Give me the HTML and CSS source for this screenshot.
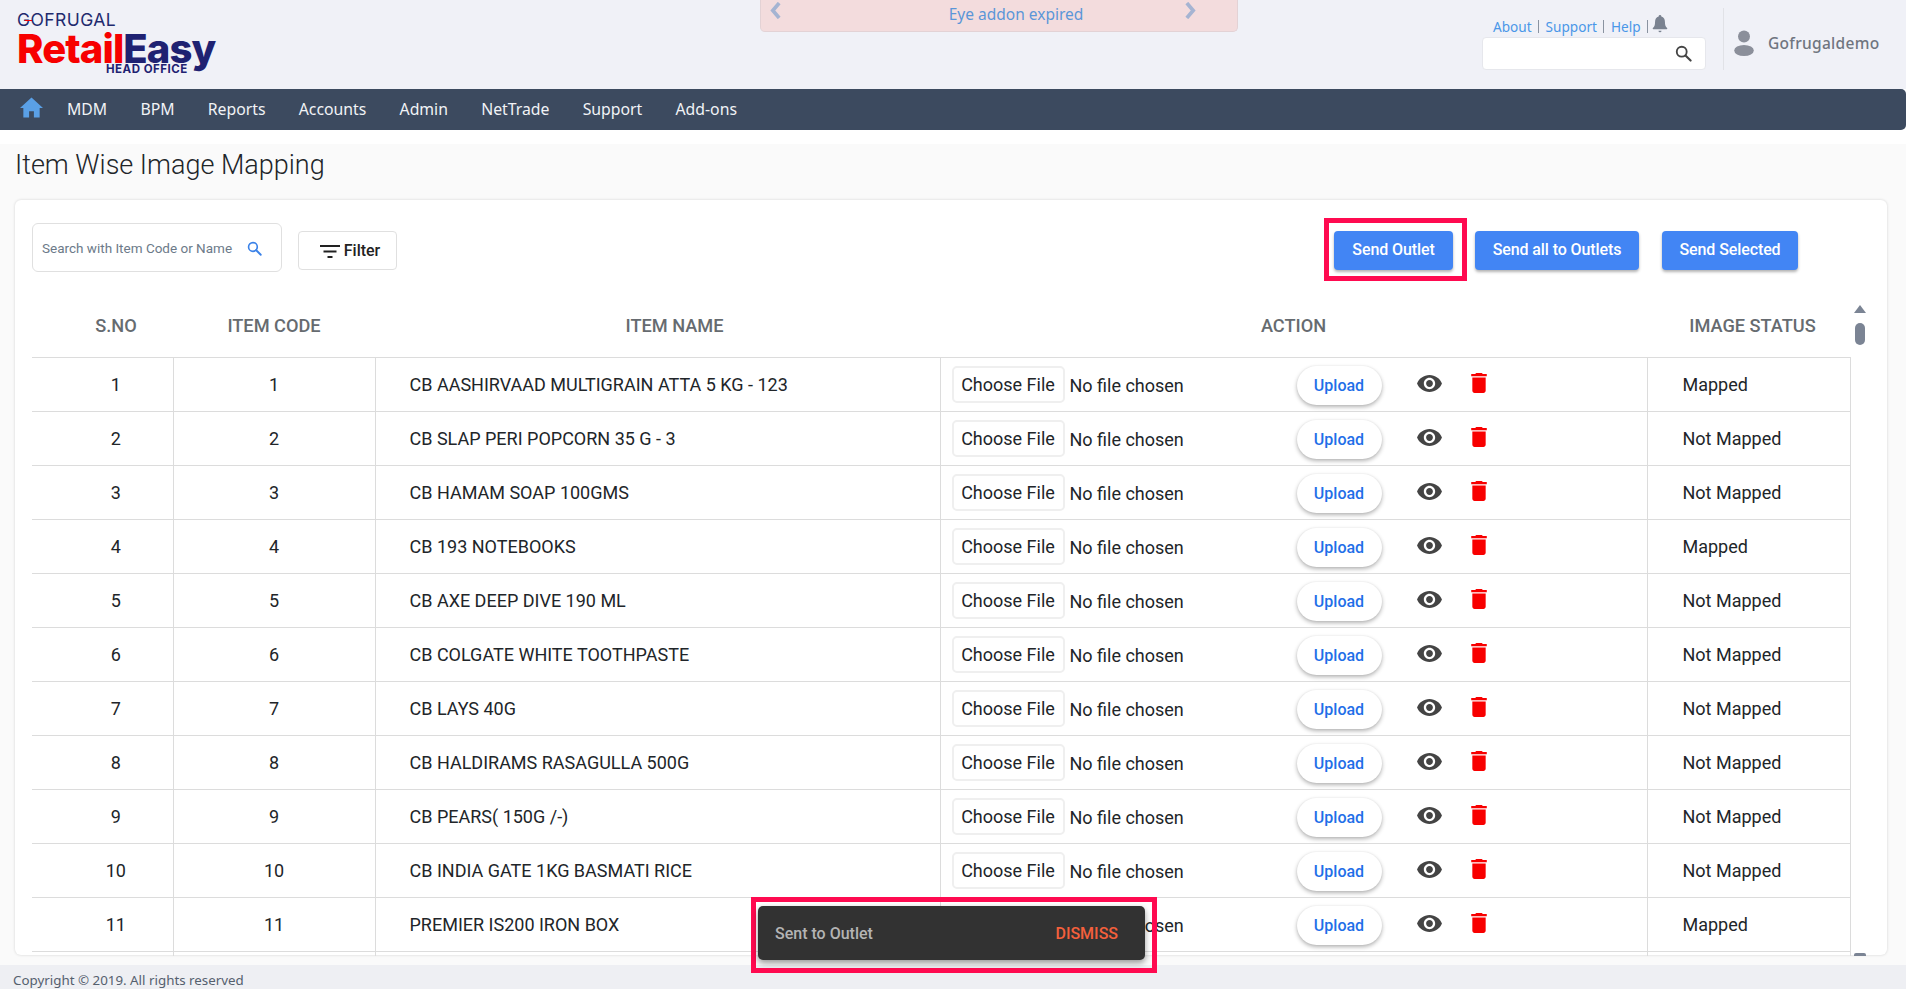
FILE: index.html
```html
<!DOCTYPE html>
<html lang="en">
<head>
<meta charset="utf-8">
<title>Item Wise Image Mapping</title>
<link rel="stylesheet" href="styles.css">
</head>
<body>
<svg class="defs" aria-hidden="true">
  <symbol id="eye" viewBox="1 4.5 22 15"><path d="M12 4.5C7 4.5 2.73 7.61 1 12c1.73 4.39 6 7.5 11 7.5s9.27-3.11 11-7.5c-1.73-4.39-6-7.5-11-7.5zM12 17c-2.76 0-5-2.24-5-5s2.24-5 5-5 5 2.24 5 5-2.24 5-5 5zm0-8c-1.66 0-3 1.34-3 3s1.34 3 3 3 3-1.34 3-3-1.34-3-3-3z"/></symbol>
  <symbol id="trash" viewBox="5 3 14 18"><path d="M6 19c0 1.1.9 2 2 2h8c1.1 0 2-.9 2-2V7H6v12zM19 4h-3.5l-1-1h-5l-1 1H5v2h14V4z"/></symbol>
  <symbol id="search" viewBox="0 0 24 24"><circle cx="9.5" cy="9.5" r="7" fill="none" stroke="currentColor" stroke-width="2.6"/><path d="M14.8 14.8 22 22" fill="none" stroke="currentColor" stroke-width="3" stroke-linecap="round"/></symbol>
</svg>
<div class="app">
  <header class="topbar">
    <div class="logo">
      <span class="logo-brand">GOFRUGAL</span>
      <span class="logo-main"><span class="logo-retail">Retail</span><span class="logo-easy">Easy</span></span>
      <span class="logo-sub">HEAD OFFICE</span>
    </div>
    <div class="banner">
      <svg class="chev" viewBox="0 0 12 16"><path d="M9 1 3 8l6 7" /></svg>
      <span>Eye addon expired</span>
      <svg class="chev" viewBox="0 0 12 16"><path d="M3 1l6 7-6 7" /></svg>
    </div>
    <div class="top-right">
      <div class="top-tools">
        <div class="top-links">
          <a>About</a><i></i><a>Support</a><i></i><a>Help</a><i></i>
          <svg class="bell" viewBox="0 0 16 19"><path d="M8 0a1.4 1.4 0 0 0-1.4 1.5C3.9 2.200 2.800 4.500 2.800 7c0 3.600-.7 5.300-2.300 6.700-.4.400-.2 1.300.6 1.300h13.800c.8 0 1-.9.6-1.300-1.600-1.400-2.300-3.100-2.300-6.700 0-2.500-1.100-4.800-3.800-5.500A1.400 1.400 0 0 0 8 0zM6.400 16.600h3.200a1.600 1.600 0 0 1-3.200 0z"/></svg>
        </div>
        <div class="top-search">
          <svg class="top-search-icon"><use href="#search"/></svg>
        </div>
      </div>
      <div class="user">
        <svg class="avatar" viewBox="0 0 20 26"><circle cx="10" cy="6.500" r="6"/><ellipse cx="10" cy="20.500" rx="9.800" ry="5.500"/></svg>
        <span>Gofrugaldemo</span>
      </div>
    </div>
  </header>

  <nav class="navbar">
    <svg class="home" viewBox="0 0 24 21"><path d="M12 0 0 11h3.500v10h6v-6.500h5V21h6V11H24z"/></svg>
    <a>MDM</a><a>BPM</a><a>Reports</a><a>Accounts</a><a>Admin</a><a>NetTrade</a><a>Support</a><a>Add-ons</a>
  </nav>

  <main class="content">
    <h1 class="page-title">Item Wise Image Mapping</h1>
    <section class="card">
      <div class="toolbar">
        <div class="search-box">
          <span>Search with Item Code or Name</span>
          <svg class="search-icon"><use href="#search"/></svg>
        </div>
        <button class="filter-btn">
          <svg class="filter-icon" viewBox="0 0 20 13"><path d="M0 0h20v2H0zM3.500 5.500h13v2h-13zM7.500 11h5v2h-5z"/></svg>
          Filter
        </button>
        <div class="actions">
          <div class="highlighted">
            <button class="primary send-outlet">Send Outlet</button>
            <span class="mark mark-btn"></span>
          </div>
          <button class="primary send-all">Send all to Outlets</button>
          <button class="primary send-selected">Send Selected</button>
        </div>
      </div>
      <div class="table-area">
        <table class="grid">
          <colgroup><col class="c1"><col class="c2"><col class="c3"><col class="c4"><col class="c5"></colgroup>
          <thead>
            <tr><th class="col-sno">S.NO</th><th>ITEM CODE</th><th class="col-name">ITEM NAME</th><th>ACTION</th><th class="col-status-h">IMAGE STATUS</th></tr>
          </thead>
          <tbody>
            <tr><td class="col-sno">1</td><td>1</td><td class="col-name">CB AASHIRVAAD MULTIGRAIN ATTA 5 KG - 123</td><td><div class="act"><button class="file">Choose File</button><span class="nofile">No file chosen</span><button class="upload">Upload</button><svg class="eye"><use href="#eye"/></svg><svg class="trash"><use href="#trash"/></svg></div></td><td class="col-status">Mapped</td></tr>
            <tr><td class="col-sno">2</td><td>2</td><td class="col-name">CB SLAP PERI POPCORN 35 G - 3</td><td><div class="act"><button class="file">Choose File</button><span class="nofile">No file chosen</span><button class="upload">Upload</button><svg class="eye"><use href="#eye"/></svg><svg class="trash"><use href="#trash"/></svg></div></td><td class="col-status">Not Mapped</td></tr>
            <tr><td class="col-sno">3</td><td>3</td><td class="col-name">CB HAMAM SOAP 100GMS</td><td><div class="act"><button class="file">Choose File</button><span class="nofile">No file chosen</span><button class="upload">Upload</button><svg class="eye"><use href="#eye"/></svg><svg class="trash"><use href="#trash"/></svg></div></td><td class="col-status">Not Mapped</td></tr>
            <tr><td class="col-sno">4</td><td>4</td><td class="col-name">CB 193 NOTEBOOKS</td><td><div class="act"><button class="file">Choose File</button><span class="nofile">No file chosen</span><button class="upload">Upload</button><svg class="eye"><use href="#eye"/></svg><svg class="trash"><use href="#trash"/></svg></div></td><td class="col-status">Mapped</td></tr>
            <tr><td class="col-sno">5</td><td>5</td><td class="col-name">CB AXE DEEP DIVE 190 ML</td><td><div class="act"><button class="file">Choose File</button><span class="nofile">No file chosen</span><button class="upload">Upload</button><svg class="eye"><use href="#eye"/></svg><svg class="trash"><use href="#trash"/></svg></div></td><td class="col-status">Not Mapped</td></tr>
            <tr><td class="col-sno">6</td><td>6</td><td class="col-name">CB COLGATE WHITE TOOTHPASTE</td><td><div class="act"><button class="file">Choose File</button><span class="nofile">No file chosen</span><button class="upload">Upload</button><svg class="eye"><use href="#eye"/></svg><svg class="trash"><use href="#trash"/></svg></div></td><td class="col-status">Not Mapped</td></tr>
            <tr><td class="col-sno">7</td><td>7</td><td class="col-name">CB LAYS 40G</td><td><div class="act"><button class="file">Choose File</button><span class="nofile">No file chosen</span><button class="upload">Upload</button><svg class="eye"><use href="#eye"/></svg><svg class="trash"><use href="#trash"/></svg></div></td><td class="col-status">Not Mapped</td></tr>
            <tr><td class="col-sno">8</td><td>8</td><td class="col-name">CB HALDIRAMS RASAGULLA 500G</td><td><div class="act"><button class="file">Choose File</button><span class="nofile">No file chosen</span><button class="upload">Upload</button><svg class="eye"><use href="#eye"/></svg><svg class="trash"><use href="#trash"/></svg></div></td><td class="col-status">Not Mapped</td></tr>
            <tr><td class="col-sno">9</td><td>9</td><td class="col-name">CB PEARS( 150G /-)</td><td><div class="act"><button class="file">Choose File</button><span class="nofile">No file chosen</span><button class="upload">Upload</button><svg class="eye"><use href="#eye"/></svg><svg class="trash"><use href="#trash"/></svg></div></td><td class="col-status">Not Mapped</td></tr>
            <tr><td class="col-sno">10</td><td>10</td><td class="col-name">CB INDIA GATE 1KG BASMATI RICE</td><td><div class="act"><button class="file">Choose File</button><span class="nofile">No file chosen</span><button class="upload">Upload</button><svg class="eye"><use href="#eye"/></svg><svg class="trash"><use href="#trash"/></svg></div></td><td class="col-status">Not Mapped</td></tr>
            <tr><td class="col-sno">11</td><td>11</td><td class="col-name">PREMIER IS200 IRON BOX</td><td><div class="act"><button class="file">Choose File</button><span class="nofile">No file chosen</span><button class="upload">Upload</button><svg class="eye"><use href="#eye"/></svg><svg class="trash"><use href="#trash"/></svg></div></td><td class="col-status">Mapped</td></tr>
            <tr class="cut-row"><td></td><td></td><td></td><td></td><td></td></tr>
          </tbody>
        </table>
        <div class="rail">
          <span class="rail-arrow"></span>
          <span class="rail-thumb"></span>
          <span class="rail-end"></span>
        </div>
      </div>
    </section>
  </main>

  <footer class="footer">Copyright © 2019. All rights reserved</footer>

  <div class="toast-wrap">
    <div class="toast">
      <span class="toast-msg">Sent to Outlet</span>
      <span class="toast-action">DISMISS</span>
    </div>
  </div>
</div>
</body>
</html>
```
FILE: styles.css
```css
* { box-sizing: border-box; }
html, body { margin: 0; height: 100%; overflow: hidden; }
body { font-family: Roboto, "Liberation Sans", sans-serif; color: #212529; background: #fff; }
.defs { position: absolute; width: 0; height: 0; }
button { font-family: inherit; cursor: pointer; }

.app { height: 989px; display: flex; flex-direction: column; position: relative; }

/* top bar */
.topbar { height: 89px; flex: none; background: #f0f1f7; display: grid; grid-template-columns: 760px 478px 1fr; align-items: start; }
.logo { display: flex; flex-direction: column; padding: 12px 0 0 17px; font-family: Inter, "Liberation Sans", sans-serif; position: relative; }
.logo::after { content: ""; position: absolute; left: 25px; top: 20px; width: 7px; height: 1px; background: #f70000; }
.logo-brand { font-size: 17.500px; line-height: 16px; font-weight: 400; color: #1f2a6e; letter-spacing: .42px; }
.logo-main { font-size: 40px; line-height: 29px; font-weight: 800; letter-spacing: -.9px; margin-top: 6px; }
.logo-retail { color: #f70000; }
.logo-easy { color: #1f2272; }
.logo-sub { font-size: 11.500px; line-height: 10px; font-weight: 700; color: #1f2272; letter-spacing: .5px; margin: 1px 0 0 89px; }

.banner { height: 32px; background: #f3dcdd; border: 1px solid #e3d2d5; border-top: 0; border-radius: 0 0 5px 5px; display: flex; align-items: center; justify-content: space-between; padding: 0 40px 3px 8px; font: 15.500px "Noto Sans", sans-serif; color: #5b96d8; }
.chev { width: 14px; height: 17px; margin-top: -8px; fill: none; stroke: #a5b4d2; stroke-width: 3.500; }
.banner span { flex: 1; text-align: center; padding-left: 66px; }

.top-right { display: flex; justify-content: flex-end; height: 100%; }
.top-tools { width: 224px; display: flex; flex-direction: column; padding-top: 16px; margin-right: 17px; }
.top-links { display: flex; align-items: center; height: 21px; padding-left: 11px; font: 13.600px "Noto Sans", sans-serif; color: #4a97e8; }
.top-links i { width: 1px; height: 13px; background: #8a93a0; margin: 0 6.500px; }
.top-links i:nth-of-type(3) { margin-right: 4px; }
.bell { width: 16px; height: 18px; fill: #7a8290; margin-top: -6px; }
.top-search { height: 33px; background: #fff; border: 1px solid #e6e7ec; border-radius: 4px; display: flex; align-items: center; justify-content: flex-end; padding-right: 13px; }
.top-search-icon { width: 17px; height: 17px; color: #444; }
.user { width: 183px; margin-top: 8px; height: 62px; padding: 8px 0 0 10px; border-left: 1px solid #e1e2e7; display: flex; align-items: center; gap: 14px; font: 500 15.500px "Noto Sans", sans-serif; letter-spacing: .3px; color: #6f757f; }
.avatar { width: 20px; height: 26px; fill: #8b8f9a; flex: none; margin-top: -1px; }

/* nav */
.navbar { height: 41px; flex: none; background: #3c4a5f; border-radius: 0 5px 5px 0; display: flex; align-items: center; padding: 0 0 2px 20px; gap: 33.200px; font: 15.800px "Noto Sans", sans-serif; color: #f1f3f6; }
.home { width: 23px; height: 21px; fill: #5aa0e6; margin-right: -9.200px; margin-top: -2px; }
.navbar a { white-space: nowrap; }

/* main */
.content { flex: 1; min-height: 0; margin-top: 14px; background: #fafafa; padding: 0 19px 0 15px; display: flex; flex-direction: column; }
.page-title { margin: 0; height: 56px; padding: 3px 0 0; font-size: 27px; line-height: 36px; font-weight: 300; color: #212529; }
.card { height: 755px; background: #fff; border-radius: 6px; box-shadow: 0 0 3px rgba(0,0,0,.16); padding: 0 0 0 17px; display: flex; flex-direction: column; flex: none; }

.toolbar { height: 100px; flex: none; display: flex; align-items: flex-start; }
.search-box { margin-top: 23px; width: 250px; height: 49px; border: 1px solid #e0e0e0; border-radius: 6px; display: flex; align-items: center; padding: 1px 0 0 9px; font-size: 13.500px; color: #6c7a89; white-space: nowrap; }
.search-icon { width: 15px; height: 15px; margin-left: 15px; color: #3b82e8; flex: none; }
.filter-btn { margin: 31px 0 0 16px; width: 99px; height: 39px; background: #fff; border: 1px solid #e0e0e0; border-radius: 4px; font-size: 16px; font-weight: 500; color: #222; display: flex; align-items: center; justify-content: center; gap: 4px; padding: 0 0 0 5px; }
.filter-icon { width: 20px; height: 13px; fill: #222; margin-top: 2px; }
.actions { margin-left: 937px; margin-top: 31px; display: flex; }
.primary { height: 39px; background: #4285f4; border: 0; border-radius: 4px; color: #fff; font-size: 16px; font-weight: 500; box-shadow: 0 2px 3px rgba(0,0,0,.3); padding: 0 0 2px; letter-spacing: -.1px; }
.highlighted { position: relative; height: 39px; }
.send-outlet { width: 119px; }
.send-all { width: 164px; margin-left: 22px; }
.send-selected { width: 136px; margin-left: 23px; }
.mark { position: absolute; border: 5px solid #ff0a50; pointer-events: none; }
.mark-btn { left: -10px; top: -13px; right: -14px; bottom: -11px; }

.table-area { height: 656px; flex: none; display: flex; overflow: hidden; }
.grid { width: 1818px; flex: none; align-self: flex-start; table-layout: fixed; border-collapse: collapse; font-size: 18px; }
.c1 { width: 141px; } .c2 { width: 202px; } .c3 { width: 565px; } .c4 { width: 707px; } .c5 { width: 203px; }
.grid th { height: 57px; padding: 0 0 5px; font-size: 18.200px; font-weight: 500; color: #666b70; text-align: center; border-bottom: 1px solid #dcdcdc; }
.grid td { height: 54px; padding: 0; text-align: center; border: 1px solid #dcdcdc; white-space: nowrap; }
.grid th:first-child, .grid td:first-child { border-left: 0; }
.grid .col-sno { padding-left: 27px; }
.grid .col-name { padding-left: 34px; }
.grid td.col-name { text-align: left; }
.grid .col-status-h { padding-left: 8px; }
.grid td.col-status { text-align: left; padding-left: 35px; }

.act { display: flex; align-items: center; padding-left: 11px; height: 100%; }
.file { width: 113px; height: 37px; flex: none; background: #fff; border: 2px solid #efefef; border-radius: 5px; font-size: 18px; color: #212529; padding: 0 0 1px; margin-top: 1px; }
.nofile { width: 232px; flex: none; padding-left: 5px; text-align: left; margin-top: 3px; }
.upload { width: 85px; height: 39px; flex: none; background: #fff; border: 0; border-radius: 20px; color: #1f6fe8; font-size: 16px; font-weight: 500; box-shadow: 0 2px 4px rgba(0,0,0,.3), 0 0 2px rgba(0,0,0,.06); padding: 0; margin-top: 2px; }
.eye { width: 25px; height: 17px; flex: none; margin: -2px 0 0 35px; fill: #444; }
.trash { width: 16px; height: 20px; flex: none; margin: -2px 0 0 29px; fill: #f80000; }

.rail { width: 14px; margin-left: 2px; display: flex; flex-direction: column; align-items: center; }
.rail-arrow { margin-top: 5px; width: 0; height: 0; border: 6.500px solid transparent; border-top: 0; border-bottom: 8px solid #7b8494; }
.rail-thumb { margin-top: 10px; width: 10px; height: 22px; border-radius: 5px; background: #7b8494; }
.rail-end { margin-top: auto; width: 12px; height: 3px; border-radius: 2px 2px 0 0; background: #7b8494; }

/* footer */
.footer { height: 24px; flex: none; background: #eeeff3; padding: 0 0 0 13px; font: 13.350px/31px "Noto Sans", sans-serif; color: #55606e; overflow: hidden; }

/* toast: over the page, ringed by the annotation */
.toast-wrap { position: absolute; left: 751px; top: 897px; width: 406px; height: 76px; border: 5px solid #ff0a50; padding: 4px 7px 8px 2px; }
.toast { height: 100%; background: #323232; border-radius: 5px; box-shadow: 0 3px 6px rgba(0,0,0,.4); display: flex; align-items: center; justify-content: space-between; padding: 0 27px 0 17px; font-size: 16px; }
.toast-msg { color: #b4b4b4; font-weight: 500; }
.toast-action { color: #f4603c; font-weight: 500; }
```
